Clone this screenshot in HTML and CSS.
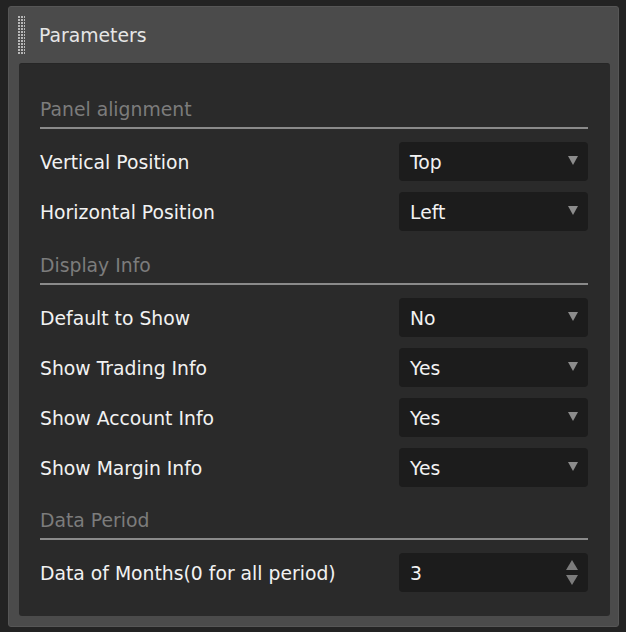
FILE: index.html
```html
<!DOCTYPE html>
<html lang="en">
<head>
<meta charset="utf-8">
<title>Parameters</title>
<link rel="stylesheet" href="styles.css">
</head>
<body>
<div class="window">
  <div class="header">
    <div class="grip"></div>
    <div class="title">Parameters</div>
  </div>
  <div class="panel">
    <div class="section">
      <div class="section-title">Panel alignment</div>
      <div class="rows">
        <div class="row"><span class="label">Vertical Position</span><div class="select"><span>Top</span><svg class="caret" width="10" height="9" viewBox="0 0 10 9"><path d="M0 0H10L5 9Z"/></svg></div></div>
        <div class="row"><span class="label">Horizontal Position</span><div class="select"><span>Left</span><svg class="caret" width="10" height="9" viewBox="0 0 10 9"><path d="M0 0H10L5 9Z"/></svg></div></div>
      </div>
    </div>
    <div class="section">
      <div class="section-title">Display Info</div>
      <div class="rows">
        <div class="row"><span class="label">Default to Show</span><div class="select"><span>No</span><svg class="caret" width="10" height="9" viewBox="0 0 10 9"><path d="M0 0H10L5 9Z"/></svg></div></div>
        <div class="row"><span class="label">Show Trading Info</span><div class="select"><span>Yes</span><svg class="caret" width="10" height="9" viewBox="0 0 10 9"><path d="M0 0H10L5 9Z"/></svg></div></div>
        <div class="row"><span class="label">Show Account Info</span><div class="select"><span>Yes</span><svg class="caret" width="10" height="9" viewBox="0 0 10 9"><path d="M0 0H10L5 9Z"/></svg></div></div>
        <div class="row"><span class="label">Show Margin Info</span><div class="select"><span>Yes</span><svg class="caret" width="10" height="9" viewBox="0 0 10 9"><path d="M0 0H10L5 9Z"/></svg></div></div>
      </div>
    </div>
    <div class="section last">
      <div class="section-title">Data Period</div>
      <div class="rows">
        <div class="row"><span class="label">Data of Months(0 for all period)</span><div class="select"><span>3</span><svg class="spin" width="12" height="26" viewBox="0 0 12 26"><path d="M6 0L12 10H0Z"/><path d="M0 15H12L6 25Z"/></svg></div></div>
      </div>
    </div>
  </div>
</div>
</body>
</html>
```
FILE: styles.css
```css
html, body {
  margin: 0;
  padding: 0;
  background: #232323;
  width: 626px;
  height: 632px;
  overflow: hidden;
}
body {
  font-family: "DejaVu Sans", "Liberation Sans", sans-serif;
  font-size: 18.8px;
  color: #f2f2f2;
}
.window {
  margin: 6px 0 0 8px;
  width: 611px;
  height: 621px;
  box-sizing: border-box;
  background: #4b4b4b;
  border: 1px solid #565656;
  border-radius: 3px;
  display: flex;
  flex-direction: column;
}
.header {
  height: 56px;
  flex: none;
  display: flex;
  align-items: center;
  padding-left: 9px;
}
.grip {
  width: 7px;
  height: 39px;
  background-image: radial-gradient(circle at 1px 1px, #b8b8b8 0.9px, transparent 1.1px);
  background-size: 3px 3px;
  margin-right: 14px;
}
.title {
  line-height: 23px;
  color: #e6e6e6;
}
.panel {
  flex: 1;
  margin: 0 8px 10px 10px;
  background: #2a2a2a;
  border-top: 1px solid #262626;
  border-radius: 3px;
  padding: 11px 22px 0 21px;
}
.section {
  margin-top: 23px;
}
.section.last {
  margin-top: 22px;
}
.section-title {
  line-height: 23px;
  color: #7c7c7c;
  padding-bottom: 6px;
  border-bottom: 2px solid #8a8a8a;
  margin-bottom: 13px;
}
.rows {
  display: flex;
  flex-direction: column;
  gap: 11px;
}
.row {
  display: flex;
  align-items: center;
  justify-content: space-between;
  height: 39px;
}
.label {
  line-height: 23px;
  white-space: nowrap;
  padding-top: 1px;
}
.select {
  width: 189px;
  height: 39px;
  box-sizing: border-box;
  background: #1c1c1c;
  border-radius: 4px;
  display: flex;
  align-items: center;
  justify-content: space-between;
  padding: 1px 10px 0 11px;
  line-height: 23px;
}
.caret {
  fill: #8c8c8c;
  margin-top: -3px;
}
.spin {
  fill: #7c7c7c;
  margin-top: -1px;
}
```
